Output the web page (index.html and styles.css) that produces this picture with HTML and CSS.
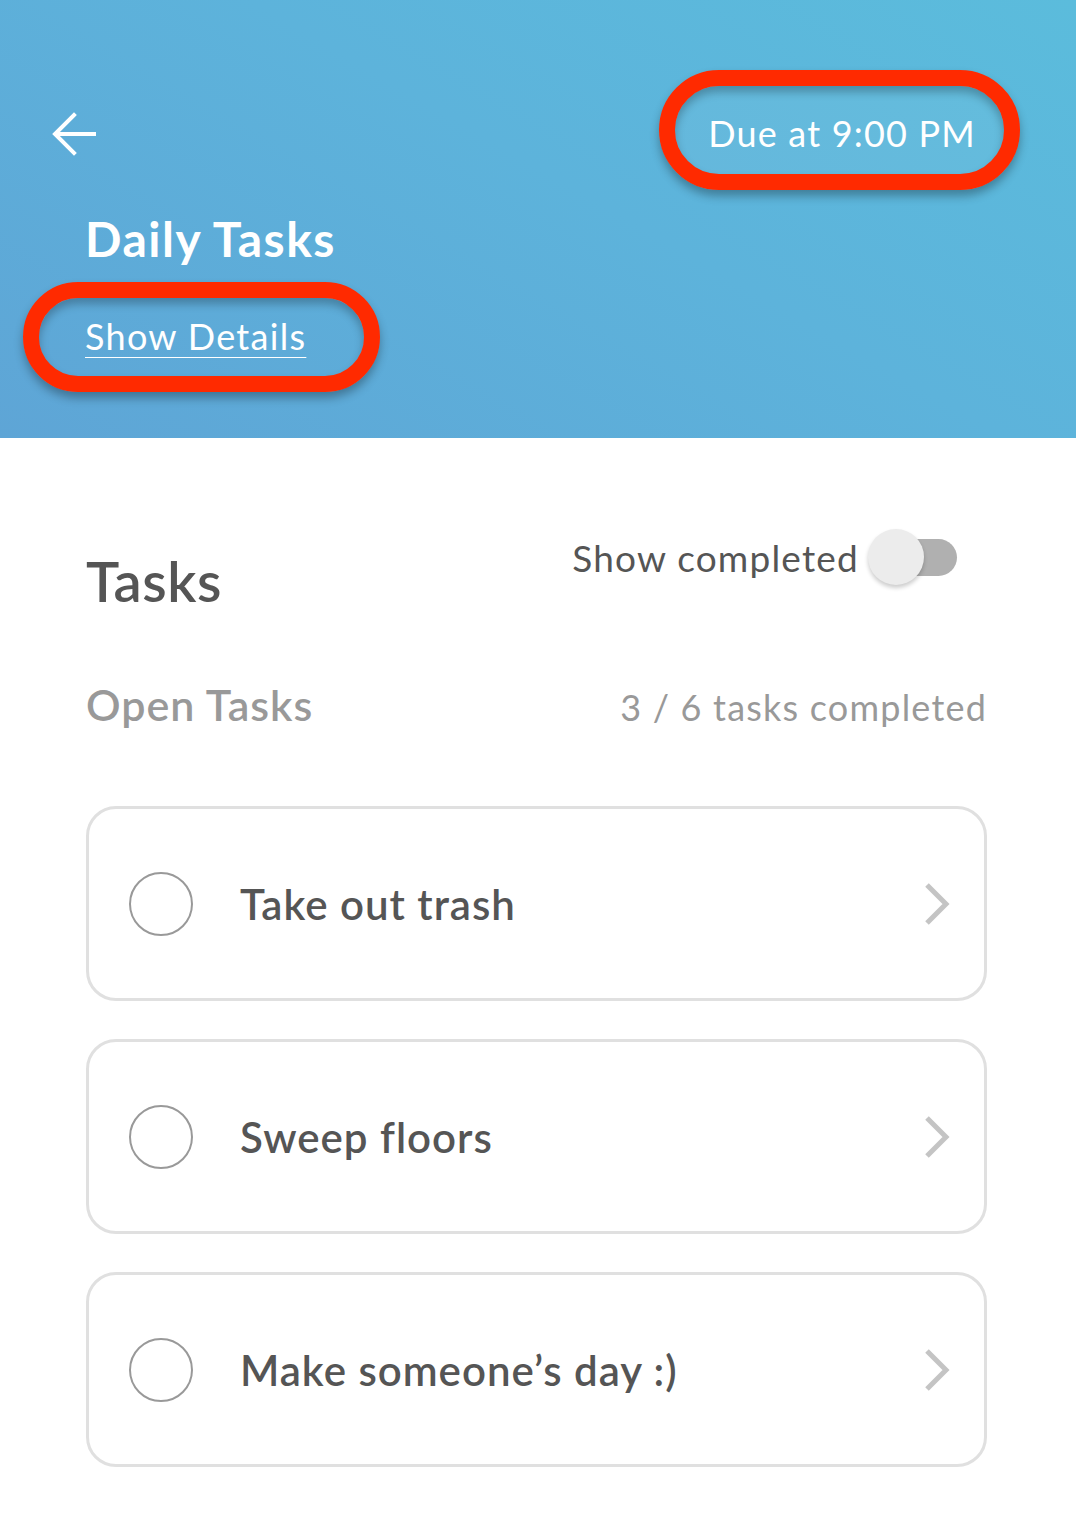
FILE: index.html
```html
<!DOCTYPE html>
<html lang="en">
<head>
  <meta charset="UTF-8">
  <meta name="viewport" content="width=device-width, initial-scale=1.0">
  <title>Daily Tasks</title>
  <link rel="stylesheet" href="styles.css">
</head>
<body>
  <header class="hero">
    <div class="hero-top">
      <button class="back" aria-label="Back">
        <svg width="46" height="46" viewBox="0 0 46 46" fill="none" stroke="#fff" stroke-width="4" stroke-linecap="square">
          <path d="M4 23 H42"/>
          <path d="M22 4 L3 23 L22 42"/>
        </svg>
      </button>
      <div class="due marked">
        Due at 9:00 PM
        <span class="ring"></span>
      </div>
    </div>
    <h1>Daily Tasks</h1>
    <a href="#" class="details marked">
      Show Details
      <span class="ring ring-details"></span>
    </a>
  </header>

  <main class="content">
    <div class="tasks-head">
      <h2>Tasks</h2>
      <label class="toggle-row">
        Show completed
        <span class="switch"><span class="knob"></span></span>
      </label>
    </div>

    <div class="open-head">
      <h3>Open Tasks</h3>
      <span class="progress">3 / 6 tasks completed</span>
    </div>

    <!-- Open task cards -->
    <ul class="task-list">
      <li class="task-card">
        <span class="check"></span>
        <span class="task-name">Take out trash</span>
        <svg class="chevron" width="26" height="42" viewBox="0 0 26 42" fill="none" stroke="#c4c4c4" stroke-width="5">
          <path d="M3 2 L22 21 L3 40"/>
        </svg>
      </li>
      <li class="task-card">
        <span class="check"></span>
        <span class="task-name">Sweep floors</span>
        <svg class="chevron" width="26" height="42" viewBox="0 0 26 42" fill="none" stroke="#c4c4c4" stroke-width="5">
          <path d="M3 2 L22 21 L3 40"/>
        </svg>
      </li>
      <li class="task-card">
        <span class="check"></span>
        <span class="task-name">Make someone’s day :)</span>
        <svg class="chevron" width="26" height="42" viewBox="0 0 26 42" fill="none" stroke="#c4c4c4" stroke-width="5">
          <path d="M3 2 L22 21 L3 40"/>
        </svg>
      </li>
    </ul>
  </main>
</body>
</html>
```

FILE: styles.css
```css
body {
  margin: 0;
  font-family: Lato, "Open Sans", sans-serif;
  background: #fff;
  color: #555;
}
.hero {
  height: 438px;
  box-sizing: border-box;
  padding: 86px 72px 0 52px;
  background: linear-gradient(30deg, #5ea5d6 0%, #5db3db 55%, #5bbcdc 100%);
  color: #fff;
}
.hero-top {
  display: flex;
  justify-content: space-between;
  align-items: center;
  height: 88px;
}
.back {
  background: none;
  border: none;
  padding: 0;
  margin-top: 7px;
  width: 46px;
  height: 46px;
  cursor: pointer;
}
.back svg {
  display: block;
}
.marked {
  position: relative;
}
.due {
  display: flex;
  align-items: center;
  height: 88px;
  box-sizing: border-box;
  padding: 5px 28px 0 33px;
  border-radius: 44px;
  background: rgba(255, 255, 255, 0.05);
  font-size: 36px;
  letter-spacing: 1.2px;
}
.ring {
  position: absolute;
  top: -16px;
  right: -16px;
  bottom: -16px;
  left: -16px;
  border: 16px solid #ff2a00;
  border-radius: 999px;
  box-shadow: 0 6px 10px rgba(0, 0, 0, 0.3), inset 0 6px 8px rgba(0, 0, 0, 0.25);
  pointer-events: none;
}
.hero h1 {
  margin: 36px 0 0 33px;
  font-size: 48px;
  font-weight: 700;
  line-height: 58px;
  letter-spacing: 1.5px;
}
.details {
  display: inline-block;
  margin: 46px 0 0 33px;
  color: #fff;
  font-size: 36px;
  line-height: 44px;
  letter-spacing: 1.3px;
  text-decoration: underline;
  text-decoration-thickness: 1px;
  text-underline-offset: 7px;
}
.ring-details {
  top: -32px;
  right: -74px;
  bottom: -34px;
  left: -62px;
}
.content {
  padding: 91px 89px 40px 86px;
}
.tasks-head {
  display: flex;
  justify-content: space-between;
}
.tasks-head h2 {
  margin: 20px 0 0;
  font-size: 56px;
  font-weight: 600;
  line-height: 64px;
  letter-spacing: 0.5px;
  color: #555;
}
.toggle-row {
  display: flex;
  align-items: center;
  height: 56px;
  margin-right: 30px;
  font-size: 37px;
  letter-spacing: 1.2px;
  color: #555;
}
.switch {
  position: relative;
  width: 69px;
  height: 37px;
  margin-left: 29px;
  border-radius: 19px;
  background: #b0b0b0;
}
.knob {
  position: absolute;
  left: -20px;
  top: -10px;
  width: 56px;
  height: 56px;
  border-radius: 50%;
  background: #ececec;
  box-shadow: 0 3px 4px rgba(0, 0, 0, 0.2);
}
.open-head {
  display: flex;
  justify-content: space-between;
  align-items: baseline;
  margin-top: 66px;
}
.open-head h3 {
  margin: 0;
  font-size: 43px;
  font-weight: 600;
  letter-spacing: 1px;
  color: #999;
}
.progress {
  font-size: 36px;
  letter-spacing: 1.2px;
  color: #999;
}
.task-list {
  list-style: none;
  margin: 76px 0 0;
  padding: 0;
  display: flex;
  flex-direction: column;
  gap: 38px;
}
.task-card {
  display: flex;
  align-items: center;
  height: 195px;
  box-sizing: border-box;
  padding: 0 34px 0 40px;
  border: 3px solid #e0e0e0;
  border-radius: 30px;
}
.check {
  width: 64px;
  height: 64px;
  box-sizing: border-box;
  border: 2.5px solid #999;
  border-radius: 50%;
  flex-shrink: 0;
}
.task-name {
  flex: 1;
  margin-left: 47px;
  font-size: 42px;
  font-weight: 600;
  letter-spacing: 1px;
  color: #555;
}
.chevron {
  display: block;
}
```
